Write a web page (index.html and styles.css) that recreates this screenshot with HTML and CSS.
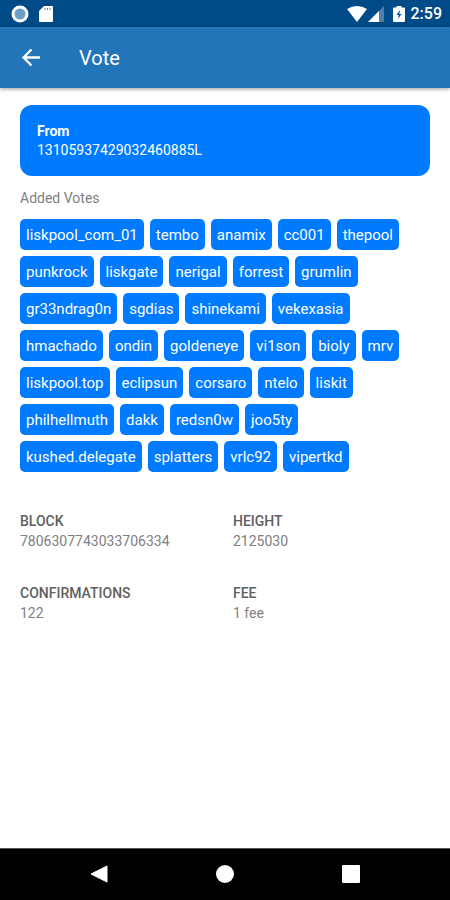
FILE: index.html
```html
<!DOCTYPE html>
<html lang="en">
<head>
  <meta charset="UTF-8">
  <meta name="viewport" content="width=device-width, initial-scale=1">
  <title>Vote</title>
  <link rel="stylesheet" href="styles.css">
</head>
<body>

  <div class="status-bar">
    <svg width="18" height="18" viewBox="0 0 18 18">
      <circle cx="9" cy="9" r="7" fill="#6c9fc8" stroke="#fff" stroke-width="3"/>
    </svg>
    <svg width="16" height="18" viewBox="0 0 16 18">
      <path d="M6 1h8q1 0 1 1v14q0 1-1 1H2q-1 0-1-1V6z" fill="#fff"/>
      <path d="M7 3v2M9.500 3v2M12 3v2" stroke="#6f7fae" stroke-width="1"/>
    </svg>
    <div class="status-right">
      <svg width="20" height="18" viewBox="0 0 20 18">
        <path d="M0 4Q10-2 20 4L10 17z" fill="#fff"/>
      </svg>
      <svg width="18" height="18" viewBox="0 0 18 18">
        <path d="M17 1v16H1z" fill="#4d81ab"/>
        <path d="M12 6v11H1z" fill="#fff"/>
      </svg>
      <svg class="battery" width="12" height="18" viewBox="0 0 12 18">
        <path d="M3.500 1h5v1.500H11q1 0 1 1V16q0 1-1 1H1q-1 0-1-1V3.500q0-1 1-1h2.500z" fill="#fff"/>
        <path d="M7 5L3.500 10h2.300L5 14l3.500-5H6.300z" fill="#004b87"/>
      </svg>
      <span class="clock">2:59</span>
    </div>
  </div>

  <header class="toolbar">
    <button class="back" type="button" aria-label="Back">
      <svg width="20" height="20" viewBox="0 0 20 20">
        <path d="M19 9.500H3M10.500 1.500L2.500 9.500l8 8" fill="none" stroke="#fff" stroke-width="2.300"/>
      </svg>
    </button>
    <h1>Vote</h1>
  </header>

  <main>
    <section class="card">
      <strong>From</strong>
      <span>13105937429032460885L</span>
    </section>

    <h2>Added Votes</h2>
    <ul class="votes">
      <li>liskpool_com_01</li>
      <li>tembo</li>
      <li>anamix</li>
      <li>cc001</li>
      <li>thepool</li>
      <li>punkrock</li>
      <li>liskgate</li>
      <li>nerigal</li>
      <li>forrest</li>
      <li>grumlin</li>
      <li>gr33ndrag0n</li>
      <li>sgdias</li>
      <li>shinekami</li>
      <li>vekexasia</li>
      <li>hmachado</li>
      <li>ondin</li>
      <li>goldeneye</li>
      <li>vi1son</li>
      <li>bioly</li>
      <li>mrv</li>
      <li>liskpool.top</li>
      <li>eclipsun</li>
      <li>corsaro</li>
      <li>ntelo</li>
      <li>liskit</li>
      <li>philhellmuth</li>
      <li>dakk</li>
      <li>redsn0w</li>
      <li>joo5ty</li>
      <li>kushed.delegate</li>
      <li>splatters</li>
      <li>vrlc92</li>
      <li>vipertkd</li>
    </ul>

    <dl class="details">
      <div>
        <dt>BLOCK</dt>
        <dd>7806307743033706334</dd>
      </div>
      <div>
        <dt>HEIGHT</dt>
        <dd>2125030</dd>
      </div>
      <div>
        <dt>CONFIRMATIONS</dt>
        <dd>122</dd>
      </div>
      <div>
        <dt>FEE</dt>
        <dd>1 fee</dd>
      </div>
    </dl>
  </main>

  <nav class="nav-bar">
    <button type="button" aria-label="Back">
      <svg width="18" height="18" viewBox="0 0 18 18"><path d="M17 1v16L1 9z" fill="#fff" stroke="#fff" stroke-linejoin="round"/></svg>
    </button>
    <button type="button" aria-label="Home">
      <svg width="18" height="18" viewBox="0 0 18 18"><circle cx="9" cy="9" r="9" fill="#fff"/></svg>
    </button>
    <button type="button" aria-label="Recent apps">
      <svg width="18" height="18" viewBox="0 0 18 18"><rect width="18" height="18" rx="1" fill="#fff"/></svg>
    </button>
  </nav>

</body>
</html>
```
FILE: styles.css
```css
* {
  box-sizing: border-box;
}

body {
  margin: 0;
  min-height: 100vh;
  display: flex;
  flex-direction: column;
  background: #fff;
  font-family: Roboto, sans-serif;
  font-size: 14px;
  color: #808080;
}

button {
  padding: 0;
  border: none;
  background: none;
  cursor: pointer;
}

svg {
  display: block;
}

.status-bar {
  display: flex;
  align-items: center;
  gap: 9px;
  height: 27px;
  padding: 0 8px 0 11px;
  background: #004b87;
}

.status-right {
  display: flex;
  align-items: center;
  margin-left: auto;
}

.battery {
  margin: 0 6px 0 8px;
}

.clock {
  font-size: 16px;
  font-weight: 500;
  color: #fff;
}

.toolbar {
  display: flex;
  align-items: center;
  height: 61px;
  padding: 0 21px;
  background: #2375ba;
  box-shadow: 0 1px 4px rgba(0, 0, 0, 0.4);
}

.toolbar h1 {
  margin: 0 0 0 38px;
  font-size: 20px;
  font-weight: 400;
  color: #fff;
}

main {
  flex: 1;
  padding: 17px 20px;
}

.card {
  display: flex;
  flex-direction: column;
  padding: 17px 17px 16px;
  border-radius: 12px;
  background: #007aff;
  color: #fff;
  line-height: 19px;
}

h2 {
  margin: 12px 0 11px;
  font-size: 14px;
  font-weight: 400;
  line-height: 20px;
}

.votes {
  display: flex;
  flex-wrap: wrap;
  margin: 0;
  padding: 0;
  list-style: none;
}

.votes li {
  margin: 0 6px 6px 0;
  padding: 1px 6px 0;
  border-radius: 5px;
  background: #007aff;
  color: #fff;
  font-size: 15px;
  line-height: 30px;
}

.details {
  display: grid;
  grid-template-columns: 1fr 1fr;
  gap: 32px 16px;
  margin: 33px 0 0;
  line-height: 20px;
}

.details dt {
  font-weight: 500;
  color: #606060;
}

.details dd {
  margin: 0;
}

.nav-bar {
  display: flex;
  height: 52px;
  padding: 0 36px 1px;
  background: #000;
  border-top: 1px solid #555;
}

.nav-bar button {
  flex: 1;
  display: flex;
  align-items: center;
  justify-content: center;
}
```
